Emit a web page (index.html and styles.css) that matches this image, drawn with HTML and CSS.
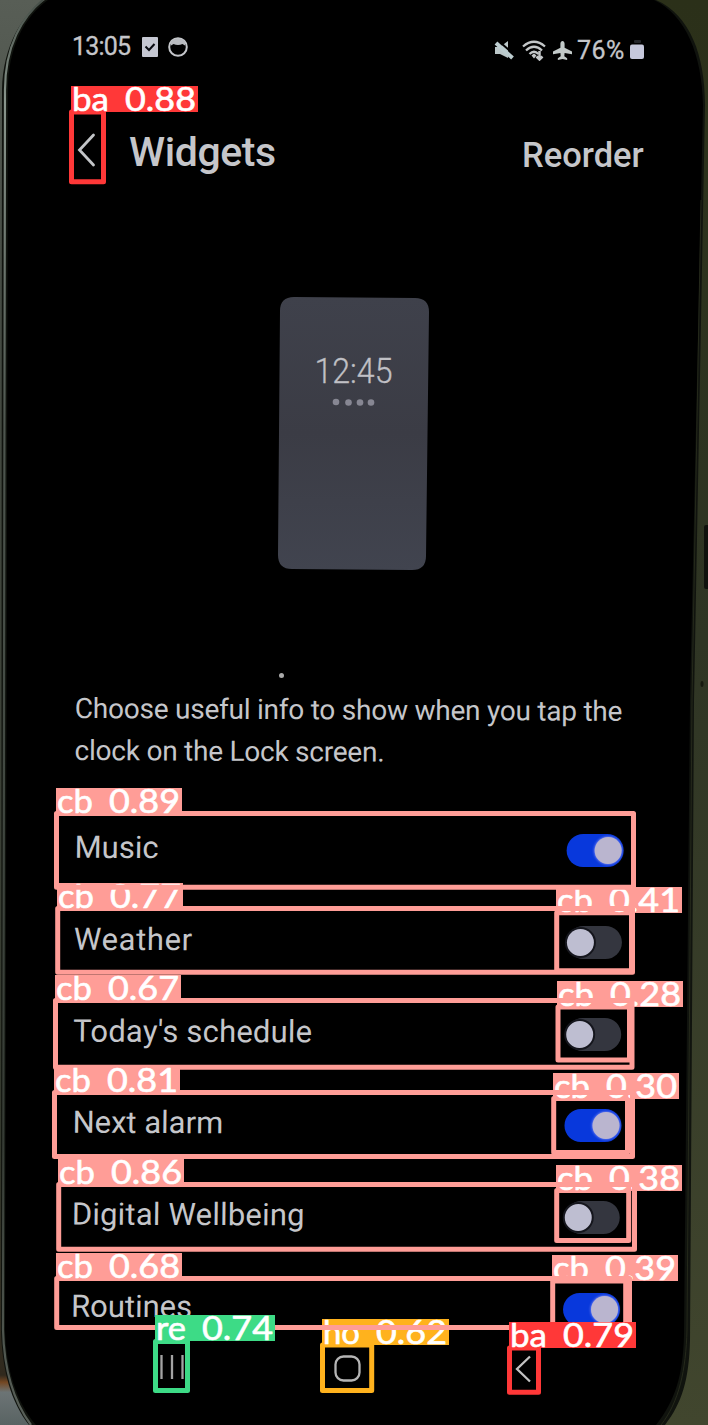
FILE: index.html
```
<!DOCTYPE html>
<html lang="en">
<head>
<meta charset="utf-8">
<title>Widgets</title>
<link rel="stylesheet" href="styles.css">
</head>
<body>
<div class="scene">
  <svg class="device" viewBox="0 0 708 1425" aria-hidden="true">
    <defs>
      <linearGradient id="rightSide" x1="0" y1="0" x2="0" y2="1"><stop offset="0" stop-color="#2b3019"/><stop offset=".45" stop-color="#2f3524"/><stop offset="1" stop-color="#41462e"/></linearGradient>
      <linearGradient id="leftSide" x1="0" y1="0" x2="0" y2="1"><stop offset="0" stop-color="#585e56"/><stop offset=".2" stop-color="#454b43"/><stop offset=".8" stop-color="#33382c"/><stop offset=".965" stop-color="#30291d"/><stop offset=".97" stop-color="#744722"/><stop offset=".977" stop-color="#6c7475"/><stop offset="1" stop-color="#596363"/></linearGradient>
      <linearGradient id="rim" x1="0" y1="0" x2="0" y2="1"><stop offset="0" stop-color="#454e47"/><stop offset=".07" stop-color="#89958c"/><stop offset=".3" stop-color="#4d554e"/><stop offset=".8" stop-color="#353b34"/><stop offset="1" stop-color="#596059"/></linearGradient>
    </defs>
    <rect width="354" height="1425" fill="url(#leftSide)"/>
    <rect x="354" width="354" height="1425" fill="url(#rightSide)"/>
    <path d="M45 0C22 14 3 46 2 90L1 1330C2 1370 11 1402 29 1425H665C682 1403 689 1380 690 1340L694 700L705 105C705 55 690 15 656 0Z" fill="#10130e"/>
    <path d="M43 0C22 17 5 46 5 90L3 1330C4 1370 14 1402 31 1425" fill="none" stroke="url(#rim)" stroke-width="2.2"/>
    <path d="M48 0C24 17 8 48 8 90L5 1330C6 1368 16 1402 36 1425H656C675 1401 683 1376 684 1335L690 700L703 105C702 55 686 15 654 0Z" fill="#000"/>
    <path d="M701 200L692 700L687 1330C686 1370 679 1402 661 1425" fill="none" stroke="#25291b"/>
    <rect x="704" y="525" width="6" height="64" rx="2" fill="#10120d"/>
    <ellipse cx="702" cy="684" rx="1.5" ry="3" fill="#171a10"/>
  </svg>

  <main class="screen">
    <header class="status">
      <span class="clock">13:05</span>
      <svg class="ico-check" viewBox="0 0 16 20"><rect width="16" height="20" rx="1" fill="#c5c7d2"/><path d="M3.5 9.5L7 13l5.500-6" fill="none" stroke="#080a10" stroke-width="2"/></svg>
      <svg class="ico-face" viewBox="0 0 20 20"><circle cx="10" cy="10" r="8.800" fill="none" stroke="#c4c6ca" stroke-width="2"/><path d="M3 4Q10-1 17 4v4.500L14.500 7Q10 9 5.500 7L3 8.500Z" fill="#b9bbc0"/></svg>
      <span class="spacer"></span>
      <svg class="ico-mute" viewBox="0 0 20 20"><path d="M1 7h5l8-6v17l-8-4H1Z" fill="#bbc7c9"/><path d="M1-2L22 16" stroke="#000" stroke-width="2"/><path d="M2 3L18.500 18" stroke="#bdcdd0" stroke-width="4"/></svg>
      <svg class="ico-wifi" viewBox="0 0 24 21"><g fill="none" stroke="#c3c6c8" stroke-width="2.300"><path d="M1 6.500Q12-3 23 6.500"/><path d="M4 10.500Q12 3 20 10.500"/><path d="M7.500 14Q12 9.500 16.500 14"/></g><path d="M9.500 15.500l2.500-2 2.500 2-2.500 3Z" fill="#c3c6c8"/><path d="M17.500 11v8M14.500 16.500l3 3 3-3" fill="none" stroke="#c3c6c8" stroke-width="2.500"/></svg>
      <svg class="ico-plane" viewBox="0 0 20 20"><path d="M10 0c1.400 0 2.200 1.500 2.200 3v4l7.800 4v3l-7.800-1.500-.3 3.500 3 2.200V20L10 19l-4.900 1v-1.800l3-2.200-.3-3.500L0 14v-3l7.800-4V3C7.800 1.500 8.600 0 10 0Z" fill="#c3cac9"/></svg>
      <span class="percent">76%</span>
      <svg class="ico-batt" viewBox="0 0 14 20"><rect x="4" width="7" height="3" rx="1" fill="#24262a"/><rect y="4.500" width="14" height="14.500" rx="2" fill="#c6c8dc"/></svg>
    </header>

    <div class="toolbar">
      <svg class="ico-back" viewBox="0 0 18 34"><path d="M16 2L2 17l14 15" fill="none" stroke="#c3c5c8" stroke-width="2.800" stroke-linecap="round"/></svg>
      <h1 class="title">Widgets</h1>
      <span class="reorder">Reorder</span>
    </div>

    <section class="preview">
      <svg class="preview-card" viewBox="0 0 152 276">
        <defs><linearGradient id="card" x1="0" y1="0" x2="0" y2="1"><stop offset="0" stop-color="#3f414b"/><stop offset=".5" stop-color="#3b3c45"/><stop offset="1" stop-color="#41444f"/></linearGradient></defs>
        <path d="M16 0L137 1Q151 1 151 15L148 259Q148 273 134 273L14 272Q0 272 0 258L2 14Q2 0 16 0Z" fill="url(#card)"/>
        <text class="preview-time" x="36.500" y="85.500" textLength="78" lengthAdjust="spacingAndGlyphs">12:45</text>
        <g fill="#878793"><circle cx="58" cy="105" r="3.300"/><circle cx="70.500" cy="105.500" r="3.300"/><circle cx="82" cy="105.500" r="3.300"/><circle cx="93" cy="105.500" r="3.300"/></g>
      </svg>
    </section>
    <i class="speck"></i>

    <p class="intro"><span class="line1">Choose useful info to show when you tap the</span><br><span class="line2">clock on the Lock screen.</span></p>

    <ul class="list">
      <li class="row"><span class="snug">Music</span><i class="toggle on"></i></li>
      <li class="row"><span class="wide">Weather</span><i class="toggle"></i></li>
      <li class="row"><span>Today's schedule</span><i class="toggle"></i></li>
      <li class="row"><span class="snug">Next alarm</span><i class="toggle on"></i></li>
      <li class="row"><span>Digital Wellbeing</span><i class="toggle"></i></li>
      <li class="row"><span class="snug">Routines</span><i class="toggle on"></i></li>
    </ul>

    <nav class="navbar">
      <svg class="nav-recents" viewBox="0 0 26 26"><path d="M2.500 1v24M13 1v24M23.500 1v24" stroke="#a3a3a3" stroke-width="2.300"/></svg>
      <svg class="nav-home" viewBox="0 0 27 27"><rect x="1.500" y="1.500" width="24" height="24" rx="8" fill="none" stroke="#b5b5b5" stroke-width="2.300"/></svg>
      <svg class="nav-back" viewBox="0 0 16 28"><path d="M15 1.500L2 14l13 12.500" fill="none" stroke="#c2c2c2" stroke-width="2.300"/></svg>
    </nav>
  </main>

  <svg class="detections" viewBox="0 0 708 1425" id="detections"></svg>
</div>
<script src="detections.js"></script>
</body>
</html>
```
FILE: styles.css
```
* { box-sizing: border-box; }
body { margin: 0; background: #000; font-family: Roboto, "Noto Sans", sans-serif; }
.scene { position: relative; width: 708px; height: 1425px; overflow: hidden; }
.device, .detections { position: absolute; inset: 0; width: 708px; height: 1425px; }
.detections { pointer-events: none; }
.screen { position: relative; display: flex; flex-direction: column; height: 1425px; color: #c5c6ca; }
.status { display: flex; align-items: center; height: 32px; margin-top: 32px; padding: 0 64px 0 72px; font-size: 25px; line-height: 30px; }
.status svg { flex: none; }
.clock { width: 58px; margin-bottom: 2px; letter-spacing: -.8px; -webkit-text-stroke: .3px; }
.ico-check { width: 16px; height: 20px; margin: 0 0 3px 12px; }
.ico-face { width: 20px; height: 20px; margin: 0 0 2px 10px; }
.spacer { flex: 1; }
.ico-mute { width: 20px; height: 20px; margin: 4px 8px 0 0; }
.ico-wifi { width: 24px; height: 21px; margin: 4px 7px 0 0; }
.ico-plane { width: 19px; height: 19px; margin: 5px 7px 0 0; }
.percent { width: 52px; margin-top: 5px; letter-spacing: .4px; -webkit-text-stroke: .3px; margin-left: -2px; }
.ico-batt { width: 14px; height: 20px; margin: 4px 0 0 1px; }
.toolbar { display: flex; align-items: center; height: 60px; margin-top: 58px; padding: 0 65px 0 77px; }
.ico-back { width: 19px; height: 34px; margin-bottom: 4px; }
.title { flex: 1; margin: 0 0 0 33px; font-size: 41px; line-height: 48px; font-weight: 500; letter-spacing: -.4px; }
.reorder { width: 121px; margin-top: 5px; font-size: 34.5px; line-height: 42px; font-weight: 500; }
.preview { display: flex; justify-content: center; margin-top: 114.5px; height: 276px; }
.preview-card { width: 152px; height: 276px; }
.preview-time { font-size: 35px; font-weight: 300; fill: #c0c0c5; stroke: #c0c0c5; stroke-width: .3px; }
.speck { width: 5px; height: 5px; margin: 100.5px 0 0 279px; border-radius: 50%; background: #aaa; }
.intro { height: 86px; margin: 10px 0 0 74.5px; font-size: 28px; line-height: 42px; letter-spacing: -.24px; white-space: nowrap; transform: rotate(.3deg); transform-origin: 0 0; }
.list { margin: 31px 0 0; padding: 0 84px 0 74.5px; list-style: none; transform: skewX(-.45deg); transform-origin: 0 0; }
.row { display: flex; align-items: center; justify-content: space-between; height: 91.7px; font-size: 31px; line-height: 36px; }
.row span { margin-bottom: 5px; letter-spacing: .2px; transform: rotate(.2deg); }
.row .snug { letter-spacing: 0; }
.row .wide { letter-spacing: .6px; }
.toggle { width: 57px; height: 33px; padding: 3px 0 0 1px; border-radius: 17px; background: #0838dc; }
.toggle:not(.on) { width: 55px; margin-right: 1px; padding-left: 0; background: #34363f; }
.toggle::before { content: ""; display: block; width: 27px; height: 27px; border-radius: 50%; background: #bebed1; box-shadow: 0 0 0 2px #15161d; }
.toggle.on::before { margin-left: 27px; background: #bab5cf; box-shadow: 0 0 3px #a6a8ff; }
.navbar { display: flex; align-items: center; height: 30px; margin-top: -3px; padding-left: 159px; }
.nav-recents { width: 26px; height: 26px; }
.nav-home { width: 27px; height: 27px; margin: 2px 0 0 149px; }
.nav-back { width: 16px; height: 28px; margin: 4px 0 0 154px; }
.det-text { font-family: Lato, Inter, sans-serif; font-size: 33px; font-weight: 400; fill: #fff; stroke: #fff; stroke-width: .6px; stroke-linejoin: round; }
.det-box { fill: none; stroke-width: 5px; stroke-linejoin: round; }
```
FILE: detections.js
```
// Lowest confidence first, so that surer detections are painted on top.
// [class, confidence, left, top, right, bottom, label left, label width, label top]
const detections = [
  ["cb", "0.28", 558, 1007, 629.5, 1060, 557, 126, 981],
  ["cb", "0.30", 553.7, 1098.5, 627.5, 1152.5, 553, 126, 1073],
  ["cb", "0.38", 556.7, 1190.5, 628.7, 1240.5, 556, 126, 1165],
  ["cb", "0.39", 552.7, 1281, 625.7, 1327, 552, 126, 1255],
  ["cb", "0.41", 556.7, 912.7, 631.5, 970.7, 556, 126, 887],
  ["ho", "0.62", 322.5, 1345, 371.7, 1390.5, 322, 127, 1319],
  ["cb", "0.67", 55.5, 1000.5, 632, 1067.3, 55, 126, 975],
  ["cb", "0.68", 56.7, 1278.5, 629.5, 1327.5, 56, 126, 1253],
  ["re", "0.74", 155.5, 1341.5, 187.5, 1390.5, 155, 120, 1315],
  ["cb", "0.77", 57.7, 908.5, 632.5, 972.3, 57, 126, 883],
  ["ba", "0.79", 509.5, 1348, 538.5, 1392.3, 509, 127, 1322],
  ["cb", "0.81", 54.5, 1092.5, 632.5, 1156.5, 54, 126, 1067],
  ["cb", "0.86", 58.7, 1184.5, 634.5, 1249.3, 58, 126, 1159],
  ["ba", "0.88", 71.5, 112, 103.5, 181.7, 71, 127, 86],
  ["cb", "0.89", 56.5, 813.5, 633.5, 887.3, 56, 126, 788]
];
const colors = { cb: "#ff9d97", ho: "#ffb21d", re: "#3ddb86", ba: "#ff3838" };
const nameWidth = { cb: 36, ho: 37, re: 30, ba: 37 };
const svg = document.getElementById("detections");
function add(tag, attrs, text) {
  const el = document.createElementNS("http://www.w3.org/2000/svg", tag);
  for (const k in attrs) el.setAttribute(k, attrs[k]);
  if (text) el.textContent = text;
  svg.appendChild(el);
}
for (const [name, score, l, t, r, b, x, w, y] of detections) {
  add("rect", { class: "det-box", x: l, y: t, width: r - l, height: b - t, stroke: colors[name] });
  add("rect", { x: x, y: y, width: w, height: 26, fill: colors[name] });
  add("text", { class: "det-text", x: x + 1, y: y + 24.5, textLength: nameWidth[name], lengthAdjust: "spacingAndGlyphs" }, name);
  add("text", { class: "det-text", x: x + w - 73, y: y + 24.5, textLength: 71, lengthAdjust: "spacingAndGlyphs" }, score);
}
```
